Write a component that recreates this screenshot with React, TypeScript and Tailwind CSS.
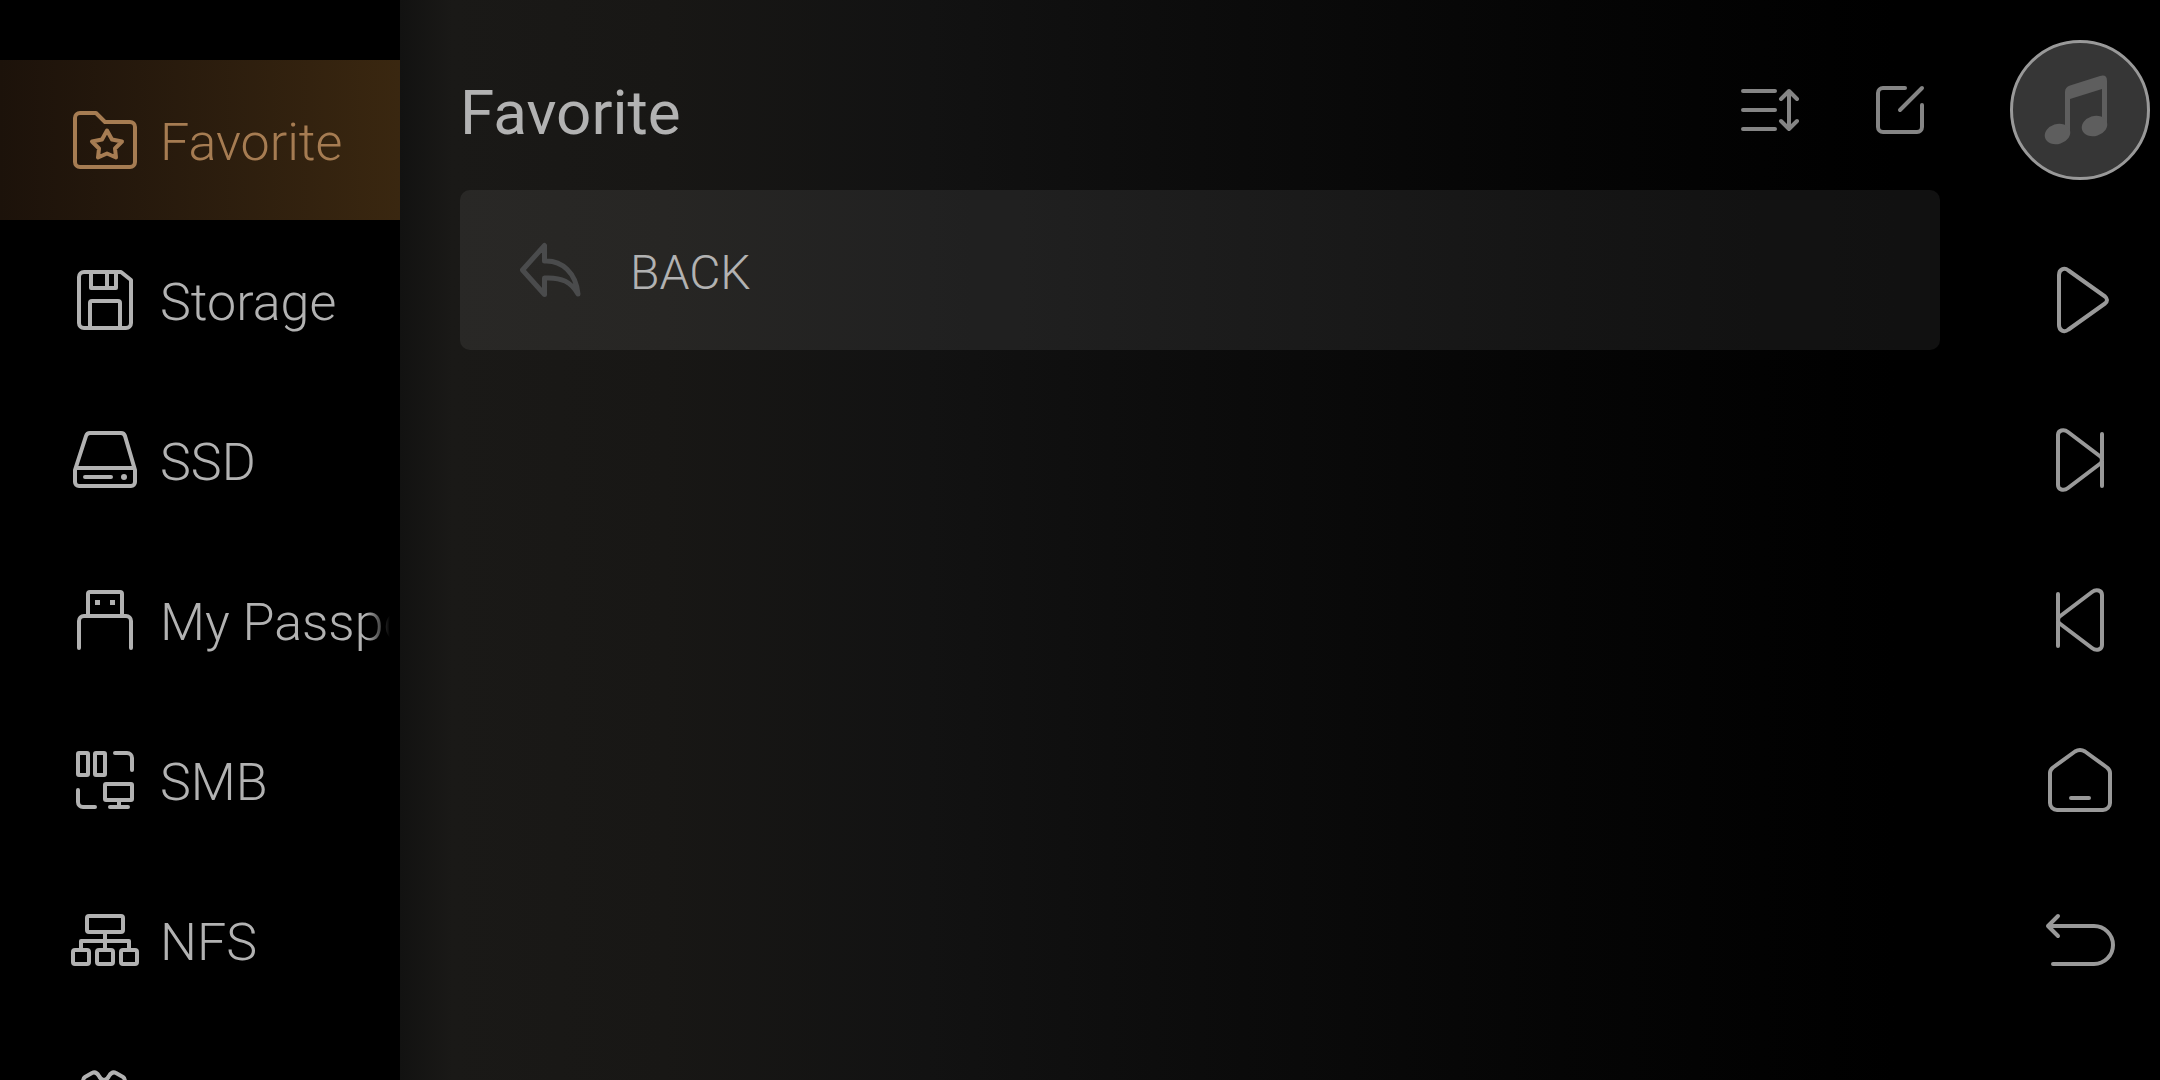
import type { ReactNode } from "react";
import clsx from "clsx";

interface IconProps {
  children: ReactNode;
  strokeWidth?: number;
}

// every line icon shares the same 80px grid
function Icon({ children, strokeWidth = 4 }: IconProps) {
  return (
    <svg
      viewBox="0 0 80 80"
      className="size-20 shrink-0"
      fill="none"
      stroke="currentColor"
      strokeWidth={strokeWidth}
      strokeLinecap="round"
      strokeLinejoin="round"
      aria-hidden="true"
    >
      {children}
    </svg>
  );
}

const sources = [
  {
    id: "favorite",
    label: "Favorite",
    icon: (
      <>
        <path d="M15 13H31L40 22H65a5 5 0 0 1 5 5V62a5 5 0 0 1-5 5H15a5 5 0 0 1-5-5V18a5 5 0 0 1 5-5Z" />
        <path d="M42 30.5L47 39.5L57 41.5L50 48.5L51 57.5L42 53.5L33 57.5L34 48.5L27 41.5L37 39.5Z" />
      </>
    ),
  },
  {
    id: "storage",
    label: "Storage",
    icon: (
      <>
        <path d="M19 12H56L66 20V63a5 5 0 0 1-5 5H19a5 5 0 0 1-5-5V17a5 5 0 0 1 5-5Z" />
        <path d="M26 12V28H51V12M42 12V28M25 68V43a2 2 0 0 1 2-2H53a2 2 0 0 1 2 2V68" />
      </>
    ),
  },
  {
    id: "ssd",
    label: "SSD",
    icon: (
      <>
        <path d="M10 50L21 16Q22 13 25 13H56Q59 13 60 16L70 50V62a4 4 0 0 1-4 4H14a4 4 0 0 1-4-4ZM12 48H68M20 57H46" />
        <circle cx="59" cy="57" r="3" fill="currentColor" stroke="none" />
      </>
    ),
  },
  {
    id: "usb",
    label: "My Passport",
    icon: (
      <>
        <path d="M23 35V14a2 2 0 0 1 2-2H55a2 2 0 0 1 2 2V35M14 68V41a5 5 0 0 1 5-5H61a5 5 0 0 1 5 5V68" />
        <path
          d="M30 20h5v5h-5ZM45 20h5v5h-5Z"
          fill="currentColor"
          stroke="none"
        />
      </>
    ),
  },
  {
    id: "smb",
    label: "SMB",
    icon: (
      <>
        <rect x="13" y="13" width="10" height="22" rx="1" />
        <rect x="30" y="13" width="10" height="22" rx="1" />
        <path d="M50 13H62a5 5 0 0 1 5 5V30M13 50V62a5 5 0 0 0 5 5H30" />
        <rect x="40" y="44" width="27" height="16" rx="1" />
        <path d="M54 60V67M45 67H63" />
      </>
    ),
  },
  {
    id: "nfs",
    label: "NFS",
    icon: (
      <>
        <rect x="22" y="16" width="36" height="16" rx="2" />
        <path d="M40 32V50M16 50V41H64V50" />
        <rect x="8" y="50" width="16" height="14" rx="2" />
        <rect x="32" y="50" width="16" height="14" rx="2" />
        <rect x="56" y="50" width="16" height="14" rx="2" />
      </>
    ),
  },
  {
    id: "settings",
    label: "",
    icon: (
      <path d="M39 20Q36 20 34 16Q31 11 27 13L20 17Q17 19 19 23Q21 30 12 31Q10 32 10 35V45Q10 48 12 49Q21 50 19 57Q17 61 20 63L27 67Q31 69 34 64Q39 58 44 64Q47 69 51 67L58 63Q61 61 59 57Q57 50 66 49Q68 48 68 45V35Q68 32 66 31Q57 30 59 23Q61 19 58 17L51 13Q47 11 44 16Q42 20 39 20Z" />
    ),
  },
];

const controls = [
  {
    label: "Play",
    icon: (
      <path d="M19 15C19 9.500 24 7 28.500 10.500L65 36.500Q69 40 65 43.500L28.500 69.500C24 73 19 70.500 19 65Z" />
    ),
  },
  {
    label: "Next",
    icon: (
      <path d="M61 37L28 12C23.500 8.500 18 10.500 18 15V65C18 69.500 23.500 71.500 28 68L61 43M62 14V66M61 37Q63 40 61 43" />
    ),
  },
  {
    label: "Previous",
    icon: (
      <path d="M19 37L52 12C56.500 8.500 62 10.500 62 15V65C62 69.500 56.500 71.500 52 68L19 43M18 14V66M19 37Q17 40 19 43" />
    ),
  },
  {
    label: "Home",
    icon: (
      <path d="M35 11.500Q40 8.500 45 11.500L67 27.500Q70 30 70 33V63a7 7 0 0 1-7 7H17a7 7 0 0 1-7-7V33Q10 30 13 27.500ZM31 58H49" />
    ),
  },
  {
    label: "Return",
    icon: <path d="M13 64H54a19 19 0 0 0 0-38H8M18 16L8 26L18 36" />,
  },
];

function Sidebar() {
  return (
    <nav className="w-[400px] shrink-0 overflow-hidden bg-black pt-[60px]">
      {sources.map(({ id, label, icon }, i) => (
        <button
          key={id}
          type="button"
          aria-label={label || id}
          className={clsx(
            "flex h-40 w-full items-center gap-[15px] pr-2.5 pl-[65px] text-left text-[52px] leading-[60px] font-light",
            i === 0
              ? "bg-linear-to-r from-[#1c120a] to-[#3a2710] text-[#a67c52]"
              : "text-[#b2b2b2]",
          )}
        >
          <Icon>{icon}</Icon>
          {label && (
            <span className="min-w-0 flex-1 overflow-hidden pt-1.5 whitespace-nowrap [mask-image:linear-gradient(to_right,black_calc(100%-24px),transparent)]">
              {label}
            </span>
          )}
        </button>
      ))}
    </nav>
  );
}

function Browser() {
  return (
    <main className="min-w-0 flex-1 px-[60px] pt-[30px]">
      <header className="flex h-40 items-center gap-[50px] text-[#858585]">
        <h1 className="flex-1 pt-1.5 text-[62px] leading-[72px] text-[#b2b2b2]">
          Favorite
        </h1>
        <button type="button" aria-label="Sort">
          <Icon>
            <path d="M13 21H45M13 40H45M13 59H45M59 21V59M51 29L59 21L67 29M51 51L59 59L67 51" />
          </Icon>
        </button>
        <button type="button" aria-label="Edit">
          <Icon>
            <path d="M45 18H23a5 5 0 0 0-5 5V57a5 5 0 0 0 5 5H57a5 5 0 0 0 5-5V35M40 40L62 18" />
          </Icon>
        </button>
      </header>
      <button
        type="button"
        className="flex h-40 w-full items-center gap-10 rounded-[10px] bg-white/[0.065] pl-[50px] text-left text-[48px] leading-[56px] font-light text-[#b2b2b2]"
      >
        <span className="text-[#4a4b4c]">
          <Icon strokeWidth={5}>
            <path d="M34.500 15.500V31C52 30 66 43 68 64C61 52 52 47 34.500 48V64.500L12.500 40Z" />
          </Icon>
        </span>
        <span className="pt-1.5">BACK</span>
      </button>
    </main>
  );
}

function Rail() {
  return (
    <aside className="flex w-40 shrink-0 flex-col items-center pt-10 text-[#999999]">
      <button
        type="button"
        aria-label="Now playing"
        className="mb-10 size-[140px] shrink-0 rounded-full border-3 border-[#999999] bg-[#363636] text-[#5e5e5e]"
      >
        <svg viewBox="3 3 134 134" className="size-full" aria-hidden="true">
          <g fill="currentColor">
            <path d="M55 94V52Q55 47 60 45.500L90 36Q97 34 97 41V86H92V49L60 59V94Z" />
            <ellipse cx="47.500" cy="94" rx="13" ry="10" transform="rotate(-18 47.500 94)" />
            <ellipse cx="84.500" cy="86" rx="13" ry="10" transform="rotate(-18 84.500 86)" />
          </g>
        </svg>
      </button>
      {controls.map(({ label, icon }) => (
        <button
          key={label}
          type="button"
          aria-label={label}
          className="flex h-40 w-full shrink-0 items-center justify-center"
        >
          <Icon>{icon}</Icon>
        </button>
      ))}
    </aside>
  );
}

export default function App() {
  return (
    <div className="flex h-screen overflow-hidden bg-black font-[Roboto,sans-serif]">
      <Sidebar />
      <div className="flex min-w-0 flex-1 bg-[linear-gradient(to_right,#121211,#1a1917_3%,#181715_15%,#121212_30%,#0b0b0b_48%,#050505_66%,#000_85%)]">
        <Browser />
        <Rail />
      </div>
    </div>
  );
}
